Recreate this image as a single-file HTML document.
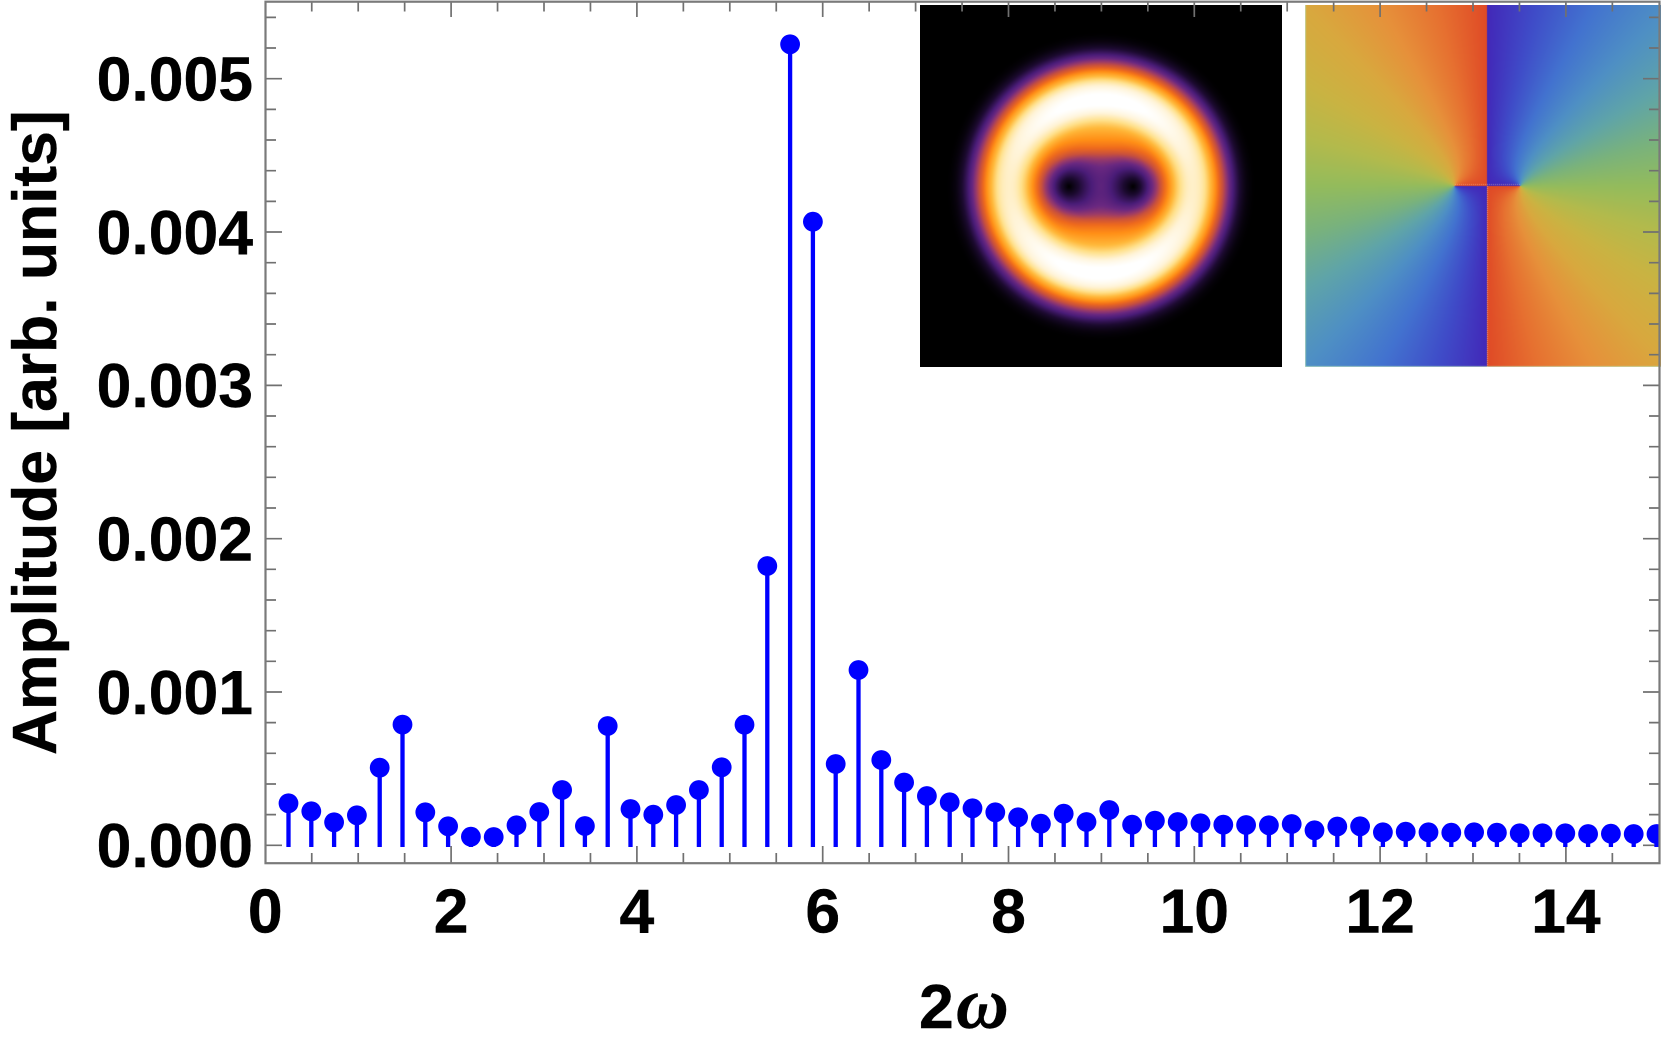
<!DOCTYPE html>
<html>
<head>
<meta charset="utf-8">
<title>Amplitude spectrum</title>
<style>
html,body{margin:0;padding:0;background:#fff;width:1661px;height:1044px;overflow:hidden}
canvas{position:absolute;display:block}
#a{left:920px;top:5px;background:#000}
#b{left:1305px;top:5px;background:#7aa}
svg{position:absolute;left:0;top:0}
text{font-family:"Liberation Sans",sans-serif;font-weight:700;font-size:62.5px;fill:#000;stroke:#000;stroke-width:.4px}
</style>
</head>
<body>
<canvas id="a" width="362" height="362"></canvas>
<canvas id="b" width="356" height="362"></canvas>
<svg width="1661" height="1044" viewBox="0 0 1661 1044" xmlns="http://www.w3.org/2000/svg">
<defs>
<clipPath id="c"><rect x="0" y="0" width="1660" height="864"/></clipPath>
<path id="ym" d="M266 814.6h10M266 784h10M266 753.3h10M266 722.6h10M266 661.3h10M266 630.7h10M266 600h10M266 569.3h10M266 508h10M266 477.3h10M266 446.7h10M266 416h10M266 354.7h10M266 324h10M266 293.4h10M266 262.7h10M266 201.4h10M266 170.7h10M266 140h10M266 109.4h10M266 48h10M266 17.4h10"/>
<path id="yM" d="M266 845.3h16M266 692h16M266 538.7h16M266 385.4h16M266 232h16M266 78.7h16"/>
</defs>
<g fill="none" stroke="#707070" stroke-width="1.7">
<use href="#ym"/><use href="#yM"/>
<use href="#ym" transform="translate(1925 0) scale(-1 1)"/><use href="#yM" transform="translate(1925 0) scale(-1 1)"/>
<path d="M311.75 863v-10M358.2 863v-10M404.65 863v-10M497.55 863v-10M544 863v-10M590.45 863v-10M683.35 863v-10M729.8 863v-10M776.25 863v-10M869.15 863v-10M915.6 863v-10M962.05 863v-10M1054.95 863v-10M1101.4 863v-10M1147.85 863v-10M1240.75 863v-10M1287.2 863v-10M1333.65 863v-10M1426.55 863v-10M1473 863v-10M1519.45 863v-10M1612.35 863v-10"/>
<path d="M451.1 863v-17M636.9 863v-17M822.7 863v-17M1008.5 863v-17M1194.3 863v-17M1380.1 863v-17M1565.9 863v-17"/>
<path d="M311.75 2v9.5M358.2 2v9.5M404.65 2v9.5M497.55 2v9.5M544 2v9.5M590.45 2v9.5M683.35 2v9.5M729.8 2v9.5M776.25 2v9.5M869.15 2v9.5M915.6 2v9.5M962.05 2v9.5M1054.95 2v9.5M1101.4 2v9.5M1147.85 2v9.5M1240.75 2v9.5M1287.2 2v9.5M1333.65 2v9.5M1426.55 2v9.5M1473 2v9.5M1519.45 2v9.5M1612.35 2v9.5"/>
<path d="M451.1 2v15M636.9 2v15M822.7 2v15M1008.5 2v15M1194.3 2v15M1380.1 2v15M1565.9 2v15"/>
</g>
<g clip-path="url(#c)" fill="none" stroke="#0000ff">
<path stroke-width="4.3" d="M288.5 847V803.3M311.3 847V811.3M334.1 847V822.3M356.9 847V815.3M379.7 847V767.7M402.5 847V724.6M425.3 847V812.3M448.1 847V826.3M470.9 847V836.7M493.7 847V837M516.5 847V825.3M539.3 847V812M562.1 847V790M584.9 847V826M607.7 847V726M630.5 847V809M653.3 847V814.7M676.1 847V805M698.9 847V790M721.7 847V767.3M744.5 847V724.7M767.3 847V566M790.1 847V44.3M812.9 847V221.7M835.7 847V764M858.5 847V670M881.3 847V760M904.1 847V782.5M926.9 847V796M949.7 847V802.3M972.5 847V808.3M995.3 847V812.3M1018.1 847V817.3M1040.9 847V823.7M1063.7 847V813.7M1086.5 847V822M1109.3 847V810M1132.1 847V824.7M1154.9 847V820.7M1177.7 847V822M1200.5 847V823.3M1223.3 847V824.7M1246.1 847V825M1268.9 847V825.3M1291.7 847V824M1314.5 847V830.3M1337.3 847V826.5M1360.1 847V826.3M1382.9 847V832.3M1405.7 847V831.7M1428.5 847V832.3M1451.3 847V832.7M1474.1 847V832.3M1496.9 847V832.7M1519.7 847V833.3M1542.5 847V833.3M1565.3 847V833.3M1588.1 847V834M1610.9 847V833.7M1633.7 847V834M1656.5 847V834"/>
<path stroke-width="19.8" stroke-linecap="round" d="M288.5 803.3h0M311.3 811.3h0M334.1 822.3h0M356.9 815.3h0M379.7 767.7h0M402.5 724.6h0M425.3 812.3h0M448.1 826.3h0M470.9 836.7h0M493.7 837h0M516.5 825.3h0M539.3 812h0M562.1 790h0M584.9 826h0M607.7 726h0M630.5 809h0M653.3 814.7h0M676.1 805h0M698.9 790h0M721.7 767.3h0M744.5 724.7h0M767.3 566h0M790.1 44.3h0M812.9 221.7h0M835.7 764h0M858.5 670h0M881.3 760h0M904.1 782.5h0M926.9 796h0M949.7 802.3h0M972.5 808.3h0M995.3 812.3h0M1018.1 817.3h0M1040.9 823.7h0M1063.7 813.7h0M1086.5 822h0M1109.3 810h0M1132.1 824.7h0M1154.9 820.7h0M1177.7 822h0M1200.5 823.3h0M1223.3 824.7h0M1246.1 825h0M1268.9 825.3h0M1291.7 824h0M1314.5 830.3h0M1337.3 826.5h0M1360.1 826.3h0M1382.9 832.3h0M1405.7 831.7h0M1428.5 832.3h0M1451.3 832.7h0M1474.1 832.3h0M1496.9 832.7h0M1519.7 833.3h0M1542.5 833.3h0M1565.3 833.3h0M1588.1 834h0M1610.9 833.7h0M1633.7 834h0M1656.5 834h0"/>
</g>
<rect x="265.5" y="1.7" width="1394" height="861.5" fill="none" stroke="#7a7a7a" stroke-width="2.2"/>
<g text-anchor="end">
<text x="253" y="100.5">0.005</text>
<text x="253" y="253.8">0.004</text>
<text x="253" y="407.2">0.003</text>
<text x="253" y="560.5">0.002</text>
<text x="253" y="713.8">0.001</text>
<text x="253" y="867.1">0.000</text>
</g>
<g text-anchor="middle">
<text x="265.3" y="932.5">0</text>
<text x="451.1" y="932.5">2</text>
<text x="636.9" y="932.5">4</text>
<text x="822.7" y="932.5">6</text>
<text x="1008.5" y="932.5">8</text>
<text x="1194.3" y="932.5">10</text>
<text x="1380.1" y="932.5">12</text>
<text x="1565.9" y="932.5">14</text>
</g>
<text x="919" y="1028">2</text>
<text x="956" y="1028" style="font-family:'Liberation Serif',serif;font-style:italic;font-size:73px">ω</text>
<text transform="translate(56 755) rotate(-90)" style="font-size:62.4px">Amplitude [arb. units]</text>
</svg>
<script>
(function(){
function hex(s){return [parseInt(s.substr(0,2),16),parseInt(s.substr(2,2),16),parseInt(s.substr(4,2),16)];}
function lookup(st,t){
  if(t<=st[0][0])return st[0][1];
  for(var i=1;i<st.length;i++){
    if(t<=st[i][0]){
      var f=(t-st[i-1][0])/(st[i][0]-st[i-1][0]),p=st[i-1][1],q=st[i][1];
      return [p[0]+(q[0]-p[0])*f,p[1]+(q[1]-p[1])*f,p[2]+(q[2]-p[2])*f];
    }
  }
  return st[st.length-1][1];
}
/* density */
var sun=[[0,'000000'],[.12,'1c0a30'],[.25,'4a1c78'],[.33,'6a2880'],[.40,'9a3a68'],[.46,'c8503c'],[.54,'ee6a1c'],[.62,'ff8f16'],[.72,'ffb83a'],[.82,'ffe08a'],[.92,'fff3d6'],[1,'ffffff']].map(function(e){return [e[0],hex(e[1])];});
var tab=[[0,2.93],[22,2.3],[29,2.25],[39,2.16],[52,1.77],[59,1.6],[66,1.52],[75,1.43],[85,1.24],[95,.975],[102,.79],[109,.58],[119,.33],[131,.143],[138,.06],[145,.0136],[152,0],[300,0]];
var g=[],i,j;
for(i=0;i<300;i++){
  for(j=1;j<tab.length;j++){if(i<=tab[j][0]){g[i]=tab[j-1][1]+(tab[j][1]-tab[j-1][1])*(i-tab[j-1][0])/(tab[j][0]-tab[j-1][0]);break;}}
}
for(var pass=0;pass<2;pass++){
  var h=g.slice();
  for(i=0;i<300;i++){var s=0,n=0;for(j=-2;j<=2;j++){var k=Math.abs(i+j);if(k<300){s+=h[k];n++;}}g[i]=s/n;}
}
var c=document.getElementById('a').getContext('2d'),im=c.createImageData(362,362),d=im.data,p=0,x,y;
for(y=0;y<362;y++)for(x=0;x<362;x++){
  var X=x-180.5,Y=y-181,A=32;
  var re=X*X-Y*Y-A*A,imz=2*X*Y,m=Math.sqrt(re*re+imz*imz);
  var r=Math.sqrt(X*X+Y*Y),r0=Math.floor(r),f=r-r0;
  var gg=r0<299?g[r0]+(g[r0+1]-g[r0])*f:0;
  var w=Math.min(1,Math.max(0,(r-35)/15)),cs=r>0?X*X/(r*r):0;
  var t=Math.min(1,m*gg*1e-4*(1+.15*cs*w)),col=lookup(sun,t);
  d[p++]=col[0];d[p++]=col[1];d[p++]=col[2];d[p++]=255;
}
c.putImageData(im,0,0);
/* phase */
var rb=[[-180,'4228b8'],[-150,'3f4cc8'],[-120,'4272cf'],[-90,'4e8fc4'],[-60,'5fa4a8'],[-30,'79b27c'],[0,'93bb5c'],[30,'b2ba4c'],[60,'c9b342'],[90,'d8a83e'],[120,'e6903a'],[150,'e67030'],[180,'df4a26']].map(function(e){return [e[0],hex(e[1])];});
c=document.getElementById('b').getContext('2d');im=c.createImageData(356,362);d=im.data;p=0;
for(y=0;y<362;y++)for(x=0;x<356;x++){
  var u=x-181.9,v=y-181+.5,a=33;
  var ph=Math.atan2(2*u*v,u*u-v*v-a*a)*180/Math.PI,cc=lookup(rb,ph);
  d[p++]=cc[0];d[p++]=cc[1];d[p++]=cc[2];d[p++]=255;
}
c.putImageData(im,0,0);
c.fillStyle='rgba(255,225,180,.55)';
for(y=181;y<362;y+=2)c.fillRect(182,y,1,1);
c.fillStyle='rgba(255,225,180,.45)';
for(x=150;x<215;x+=2)c.fillRect(x,179,1,1);
c.fillStyle='rgba(190,225,190,.7)';
c.fillRect(0,0,1,362);c.fillRect(0,361,356,1);
})();
</script>
</body>
</html>
